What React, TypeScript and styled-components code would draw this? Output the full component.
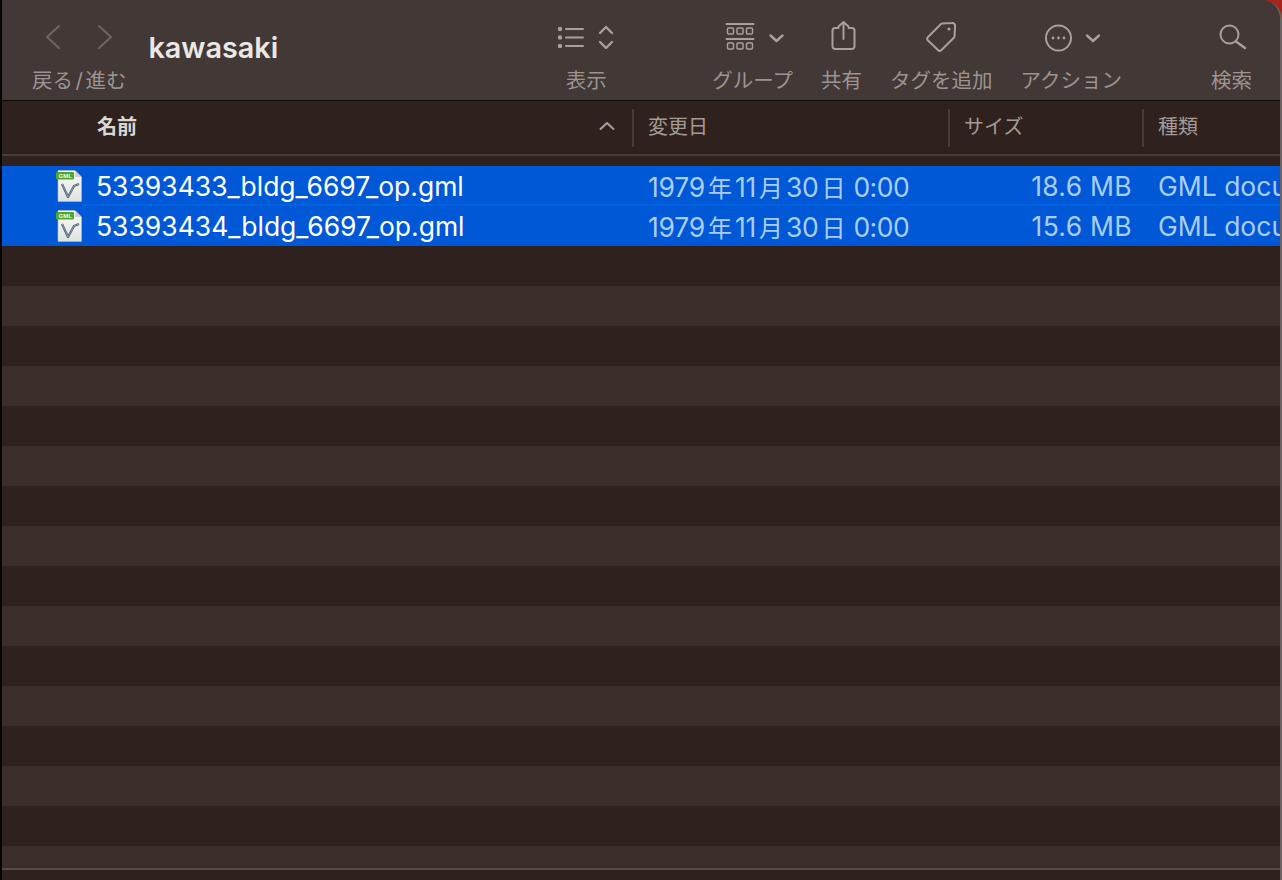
import React from "react";
import styled, { createGlobalStyle } from "styled-components";

const GlobalStyle = createGlobalStyle`
  html, body {
    margin: 0;
    padding: 0;
    background: #000;
  }
  body {
    width: 1282px;
    height: 880px;
    overflow: hidden;
    font-family: Inter, "Noto Sans CJK JP", sans-serif;
  }
`;

const Corner = styled.div`
  width: 1282px;
  height: 880px;
  background: #a5241c;
`;

const Window = styled.div`
  width: 1282px;
  height: 880px;
  box-sizing: border-box;
  border-left: 2px solid #050505;
  border-right: 2px solid #6b6462;
  border-top-right-radius: 20px;
  background: #2f211e;
  display: flex;
  flex-direction: column;
  overflow: hidden;
`;

const Toolbar = styled.div`
  flex: none;
  box-sizing: border-box;
  background: #423836;
  border-bottom: 1px solid #0c0908;
  height: 101px;
  display: flex;
  align-items: flex-start;
  padding: 0 28px 0 30px;
`;

const ToolItem = styled.div<{ $gap?: number }>`
  display: flex;
  flex-direction: column;
  align-items: center;
  margin-left: ${(p) => p.$gap ?? 28}px;
`;

const IconSlot = styled.div`
  height: 69px;
  display: flex;
  align-items: flex-start;
  justify-content: center;
`;

const ToolLabel = styled.div`
  font-size: 20.5px;
  line-height: 24px;
  color: #9c9492;
  white-space: nowrap;
`;

const Slash = styled.span`
  margin: 0 2.5px;
`;

const Title = styled.div`
  font-size: 28.8px;
  font-weight: 600;
  line-height: 34px;
  color: #ebe7e5;
  margin: 31px 0 0 22px;
`;

const Spacer = styled.div`
  flex: 1;
`;

const HeaderRow = styled.div`
  height: 53px;
  flex: none;
  border-bottom: 2px solid #483a36;
  display: grid;
  grid-template-columns: 630px 316px 194px 1fr;
  align-items: center;
`;

const HeaderCell = styled.div<{ $active?: boolean; $divider?: boolean }>`
  height: 38px;
  box-sizing: border-box;
  display: flex;
  align-items: center;
  justify-content: space-between;
  font-size: 20px;
  font-weight: ${(p) => (p.$active ? 600 : 400)};
  color: ${(p) => (p.$active ? "#dcd7d4" : "#a49b97")};
  padding-left: ${(p) => (p.$active ? 95 : 14)}px;
  padding-right: 17px;
  padding-bottom: 4px;
  border-left: ${(p) => (p.$divider ? "2px solid #493b37" : "none")};
  white-space: nowrap;
`;

const RowList = styled.div`
  flex: 1;
  overflow: hidden;
  margin-top: 10px;
`;

const Row = styled.div<{ $selected?: boolean; $alt?: boolean }>`
  position: relative;
  height: 40px;
  display: grid;
  grid-template-columns: 631px 316px 194px 1fr;
  align-items: center;
  background: ${(p) => (p.$selected ? "#0058d6" : p.$alt ? "#3a2d2a" : "#2f211e")};
  font-size: 26.5px;
  white-space: nowrap;
  overflow: hidden;
`;

const RowDivider = styled.div`
  position: absolute;
  left: 80px;
  right: 0;
  bottom: 0;
  height: 2px;
  background: #0064e2;
`;

const NameCell = styled.div`
  display: flex;
  align-items: center;
  padding-left: 54px;
  gap: 14px;
  color: #fff;
`;

const DateCell = styled.div`
  padding-left: 15px;
  color: #a9cdf8;
  letter-spacing: -0.2px;
`;

const DateUnit = styled.span`
  font-size: 24px;
  margin: 0 3px;
`;

const DateTime = styled.span`
  margin-left: 5px;
  letter-spacing: -0.5px;
`;

const SizeCell = styled.div`
  text-align: right;
  padding-right: 11px;
  color: #a9cdf8;
  letter-spacing: 0.3px;
`;

const KindCell = styled.div`
  padding-left: 15px;
  color: #a9cdf8;
`;

const Footer = styled.div`
  flex: none;
  height: 10px;
  border-top: 2px solid #574b48;
  background: #2f211e;
`;

const Line = styled.svg`
  display: block;
  fill: none;
  stroke: #a8a09d;
  stroke-width: 2;
  stroke-linecap: round;
  stroke-linejoin: round;
`;

const ToolIcon = ({ w, children }: { w: number; children: React.ReactNode }) => (
  <Line width={w} height={40} viewBox={`0 0 ${w} 40`} style={{ marginTop: 18 }}>
    {children}
  </Line>
);

const NavIcons = () => (
  <ToolIcon w={70}>
    <g stroke="#6f6663">
      <path d="M15 8L3 19L15 30" />
      <path d="M55 8L67 19L55 30" />
    </g>
  </ToolIcon>
);

const ViewIcon = () => (
  <ToolIcon w={58}>
    <circle cx="3" cy="11" r="1.2" fill="#a8a09d" />
    <circle cx="3" cy="19.5" r="1.2" fill="#a8a09d" />
    <circle cx="3" cy="28" r="1.2" fill="#a8a09d" />
    <path d="M9 11H26M9 19.5H26M9 28H26" />
    <path d="M43 15L49 9L55 15M43 24L49 30L55 24" strokeWidth="2.4" />
  </ToolIcon>
);

const GroupIcon = () => (
  <ToolIcon w={62}>
    <g transform="translate(4.5 0)">
      <path d="M0 6H27M0 21H27" />
      <g strokeWidth="1.5">
        <rect x="1" y="10" width="6" height="6" rx="1" />
        <rect x="10.5" y="10" width="6" height="6" rx="1" />
        <rect x="20" y="10" width="6" height="6" rx="1" />
        <rect x="1" y="25" width="6" height="6" rx="1" />
        <rect x="10.5" y="25" width="6" height="6" rx="1" />
        <rect x="20" y="25" width="6" height="6" rx="1" />
      </g>
    </g>
    <path d="M48.5 17.5L54.5 23L60.5 17.5" strokeWidth="2.4" />
  </ToolIcon>
);

const ShareIcon = () => (
  <ToolIcon w={30}>
    <g transform="translate(3.5 0)">
      <path d="M8 10H4.5A2.5 2.5 0 0 0 2 12.5V28.5A2.5 2.5 0 0 0 4.5 31H21.5A2.5 2.5 0 0 0 24 28.5V12.5A2.5 2.5 0 0 0 21.5 10H18" />
      <path d="M13 21V4M8 8.5L13 4L18 8.5" />
    </g>
  </ToolIcon>
);

const TagIcon = () => (
  <ToolIcon w={32}>
    <path d="M17 5.5L27 5A2.6 2.6 0 0 1 30 8L29.6 18A3 3 0 0 1 28.6 20L16.5 32A2.5 2.5 0 0 1 13 32L3 22.5A2.5 2.5 0 0 1 3 19L15 7A3 3 0 0 1 17 5.5Z" />
    <circle cx="24" cy="11" r="1.6" fill="#a8a09d" stroke="none" />
  </ToolIcon>
);

const ActionIcon = () => (
  <ToolIcon w={82}>
    <circle cx="28.5" cy="20" r="12.5" />
    <circle cx="23" cy="20" r="1.4" fill="#a8a09d" stroke="none" />
    <circle cx="28.5" cy="20" r="1.4" fill="#a8a09d" stroke="none" />
    <circle cx="34" cy="20" r="1.4" fill="#a8a09d" stroke="none" />
    <path d="M57 17.5L63 23L69 17.5" strokeWidth="2.4" />
  </ToolIcon>
);

const SearchIcon = () => (
  <ToolIcon w={30}>
    <circle cx="12.5" cy="16.5" r="9" />
    <path d="M19 23.5L28 30" strokeWidth="2.4" />
  </ToolIcon>
);

const SortChevron = () => (
  <Line width={16} height={10} viewBox="0 0 16 10">
    <path d="M1.5 8L8 2L14.5 8" />
  </Line>
);

const GmlBadge = styled.text`
  font-family: "Liberation Sans", sans-serif;
  font-size: 6px;
  font-weight: 700;
  fill: #f2fbe8;
`;

const GmlIcon = () => (
  <svg width="26" height="32" viewBox="0 0 26 32" style={{ flex: "none" }}>
    <defs>
      <linearGradient id="gmlPaper" x1="0" y1="0" x2="0" y2="1">
        <stop offset="0" stopColor="#fbfcfa" />
        <stop offset="1" stopColor="#dfe2de" />
      </linearGradient>
    </defs>
    <path d="M2 0.5H19L25.5 7V31.5H2Z" fill="url(#gmlPaper)" stroke="#b9bcb8" strokeWidth="0.6" />
    <path d="M19 0.5V7H25.5Z" fill="#cfd2ce" />
    <rect x="0" y="2" width="18" height="7.5" rx="1" fill="#4fa82b" />
    <GmlBadge x="2.5" y="8">GML</GmlBadge>
    <path d="M6 14L12 27L18 16L23 14" fill="none" stroke="#46566a" strokeWidth="2.2" strokeLinejoin="round" />
    <path d="M6 14L12 27L18 16L23 14" fill="none" stroke="#9fb3c6" strokeWidth="0.8" strokeLinejoin="round" />
  </svg>
);

const files = [
  { name: "53393433_bldg_6697_op.gml", size: "18.6 MB" },
  { name: "53393434_bldg_6697_op.gml", size: "15.6 MB" },
];

const emptyRows = Array.from({ length: 16 }, (_, i) => i);

export default function App() {
  return (
    <Corner>
      <GlobalStyle />
      <Window>
        <Toolbar>
          <ToolItem $gap={0}>
            <IconSlot>
              <NavIcons />
            </IconSlot>
            <ToolLabel>
              戻る<Slash>/</Slash>進む
            </ToolLabel>
          </ToolItem>
          <Title>kawasaki</Title>
          <Spacer />
          <ToolItem $gap={0}>
            <IconSlot>
              <ViewIcon />
            </IconSlot>
            <ToolLabel>表示</ToolLabel>
          </ToolItem>
          <ToolItem $gap={97}>
            <IconSlot>
              <GroupIcon />
            </IconSlot>
            <ToolLabel>グループ</ToolLabel>
          </ToolItem>
          <ToolItem>
            <IconSlot>
              <ShareIcon />
            </IconSlot>
            <ToolLabel>共有</ToolLabel>
          </ToolItem>
          <ToolItem>
            <IconSlot>
              <TagIcon />
            </IconSlot>
            <ToolLabel>タグを追加</ToolLabel>
          </ToolItem>
          <ToolItem>
            <IconSlot>
              <ActionIcon />
            </IconSlot>
            <ToolLabel>アクション</ToolLabel>
          </ToolItem>
          <ToolItem $gap={89}>
            <IconSlot>
              <SearchIcon />
            </IconSlot>
            <ToolLabel>検索</ToolLabel>
          </ToolItem>
        </Toolbar>
        <HeaderRow>
          <HeaderCell $active>
            名前
            <SortChevron />
          </HeaderCell>
          <HeaderCell $divider>変更日</HeaderCell>
          <HeaderCell $divider>サイズ</HeaderCell>
          <HeaderCell $divider>種類</HeaderCell>
        </HeaderRow>
        <RowList>
          {files.map((file, index) => (
            <Row $selected key={file.name}>
              <NameCell>
                <GmlIcon />
                {file.name}
              </NameCell>
              <DateCell>
                1979<DateUnit>年</DateUnit>11<DateUnit>月</DateUnit>30<DateUnit>日</DateUnit>
                <DateTime>0:00</DateTime>
              </DateCell>
              <SizeCell>{file.size}</SizeCell>
              <KindCell>GML document</KindCell>
              {index === 0 && <RowDivider />}
            </Row>
          ))}
          {emptyRows.map((i) => (
            <Row key={i} $alt={i % 2 === 1} />
          ))}
        </RowList>
        <Footer />
      </Window>
    </Corner>
  );
}
